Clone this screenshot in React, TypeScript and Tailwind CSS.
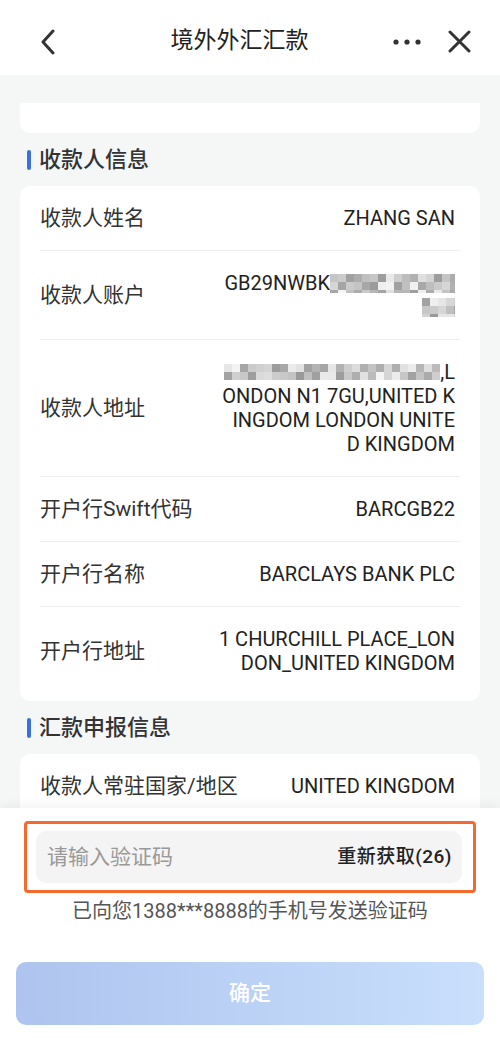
import React from "react";

const FONT = 'Roboto, "Noto Sans CJK SC", "Noto Sans", sans-serif';

function Mosaic({ w, h, seed, cell = 8 }: { w: number; h: number; seed: number; cell?: number }) {
  const cols = Math.ceil(w / cell);
  const rows = Math.ceil(h / cell);
  let s = seed;
  const rnd = () => {
    s = (s * 9301 + 49297) % 233280;
    return s / 233280;
  };
  const rects: React.ReactNode[] = [];
  for (let r = 0; r < rows; r++) {
    for (let c = 0; c < cols; c++) {
      const v = Math.round(150 + rnd() * 95);
      rects.push(
        <rect key={`${r}-${c}`} x={c * cell} y={r * cell} width={cell} height={cell} fill={`rgb(${v},${v},${v})`} />
      );
    }
  }
  return (
    <svg width={w} height={h} viewBox={`0 0 ${w} ${h}`} className="block">
      {rects}
    </svg>
  );
}

function Row({
  label,
  children,
  last,
}: {
  label: string;
  children: React.ReactNode;
  last?: boolean;
}) {
  return (
    <div className={`mx-5 flex items-center justify-between py-5 ${last ? "" : "border-b border-[#efefef]"}`}>
      <div className="text-[21px] leading-6 text-[#333] whitespace-nowrap">{label}</div>
      <div className="pr-[5px] text-right text-[20px] leading-6 text-[#222]">{children}</div>
    </div>
  );
}

function SectionTitle({ text }: { text: string }) {
  return (
    <div className="h-[53px] flex items-center pl-[27px]">
      <div className="w-[4px] h-[20px] rounded-full bg-[#3a6fdc]" />
      <div className="ml-[8px] text-[22px] font-medium text-[#333]">{text}</div>
    </div>
  );
}

export default function App() {
  return (
    <div className="w-[500px] h-[1056px] flex flex-col bg-[#f5f7f7] overflow-hidden" style={{ fontFamily: FONT }}>
      {/* header */}
      <div className="h-[75px] shrink-0 bg-white flex items-center pt-[8px]">
        <div className="w-[100px] pl-[40px] flex items-center">
          <svg width="16" height="26" viewBox="0 0 16 26" fill="none">
            <polyline points="13,2 3,13 13,24" stroke="#333" strokeWidth="3" strokeLinecap="round" strokeLinejoin="round" />
          </svg>
        </div>
        <div className="flex-1 text-center text-[23px] text-[#222] pr-[4px]">境外外汇汇款</div>
        <div className="w-[117px] flex items-center pl-[10px] gap-[27px]">
          <svg width="28" height="6" viewBox="0 0 28 6">
            <circle cx="3" cy="3" r="2.6" fill="#333" />
            <circle cx="14" cy="3" r="2.6" fill="#333" />
            <circle cx="25" cy="3" r="2.6" fill="#333" />
          </svg>
          <svg width="23" height="23" viewBox="0 0 23 23" fill="none">
            <path d="M2 2 L21 21 M21 2 L2 21" stroke="#333" strokeWidth="3" strokeLinecap="round" />
          </svg>
        </div>
      </div>

      {/* scrolling content */}
      <div className="flex-1 overflow-hidden">
        <div className="mt-[28px] mx-5 h-[30px] bg-white rounded-b-[10px]" />
        <SectionTitle text="收款人信息" />
        <div className="mx-5 bg-white rounded-[10px] pb-[6px]">
          <Row label="收款人姓名">ZHANG SAN</Row>
          <Row label="收款人账户">
            <div className="h-6 flex items-center justify-end">
              <span>GB29NWBK</span>
              <Mosaic w={125} h={19} seed={7} />
            </div>
            <div className="h-6 flex items-center justify-end">
              <Mosaic w={33} h={19} seed={23} />
            </div>
          </Row>
          <Row label="收款人地址">
            <div className="h-6 flex items-center justify-end">
              <Mosaic w={216} h={16} seed={41} />
              <span>,L</span>
            </div>
            <div>ONDON N1 7GU,UNITED K</div>
            <div>INGDOM LONDON UNITE</div>
            <div>D KINGDOM</div>
          </Row>
          <Row label="开户行Swift代码">BARCGB22</Row>
          <Row label="开户行名称">BARCLAYS BANK PLC</Row>
          <Row label="开户行地址" last>
            <div>1 CHURCHILL PLACE_LON</div>
            <div>DON_UNITED KINGDOM</div>
          </Row>
        </div>
        <SectionTitle text="汇款申报信息" />
        <div className="mx-5 bg-white rounded-[10px] pb-[6px]">
          <Row label="收款人常驻国家/地区">UNITED KINGDOM</Row>
          <Row label="交易编码" last>
            121010
          </Row>
        </div>
      </div>

      {/* bottom panel */}
      <div className="h-[248px] shrink-0 bg-white relative z-10 shadow-[0_-3px_10px_rgba(0,0,0,0.05)] flex flex-col">
        <div className="mt-[13px] mx-6 border-[3px] border-[#f5692f] rounded-[4px] pt-[7px] pb-[7px] pl-[9px] pr-[11px]">
          <div className="h-[52px] rounded-[10px] bg-[#f4f4f4] flex items-center justify-between pl-[11px] pr-[10px]">
            <span className="text-[21px] leading-[28px] text-[#999]">请输入验证码</span>
            <span className="text-[19px] leading-[28px] font-medium text-[#222] tracking-[0.5px]">重新获取(26)</span>
          </div>
        </div>
        <div className="mt-[3px] text-center text-[20px] leading-[30px] text-[#555]">已向您1388***8888的手机号发送验证码</div>
        <div className="mt-[36px] mx-4 h-[63px] rounded-[10px] bg-gradient-to-r from-[#aec4ee] to-[#c9dffc] flex items-center justify-center">
          <span className="text-[21px] font-medium text-white">确定</span>
        </div>
      </div>
    </div>
  );
}
